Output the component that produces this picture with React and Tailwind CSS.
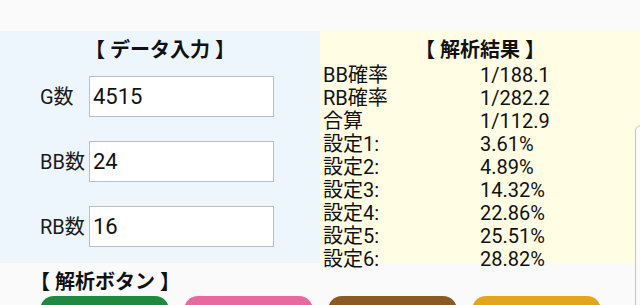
import React from "react";

const font = { fontFamily: 'Roboto, "Noto Sans CJK JP", sans-serif' };

function Field({ label, value }) {
  return (
    <div className="flex items-center h-[41px]">
      <div className="w-[89px] pl-[40px] text-[20px] leading-[24px] text-[#1a1a1a] whitespace-nowrap">{label}</div>
      <input
        readOnly
        value={value}
        className="w-[185px] h-[41px] border border-[#b9bec6] bg-white pl-[3px] text-[22px] text-[#111] outline-none"
        style={font}
      />
    </div>
  );
}

const rows = [
  ["BB確率", "1/188.1"],
  ["RB確率", "1/282.2"],
  ["合算", "1/112.9"],
  ["設定1:", "3.61%"],
  ["設定2:", "4.89%"],
  ["設定3:", "14.32%"],
  ["設定4:", "22.86%"],
  ["設定5:", "25.51%"],
  ["設定6:", "28.82%"],
];

export default function App() {
  return (
    <div className="relative w-full h-[305px] bg-[#fafafa] overflow-hidden text-[#111]" style={font}>
      <div className="h-[31px]" />
      <div className="flex h-[232px]">
        <div className="w-[320px] bg-[#eef6fd] pt-[7px]">
          <div className="text-center text-[20px] leading-[24px] font-bold">【 データ入力 】</div>
          <div className="mt-[14px] flex flex-col gap-[24px]">
            <Field label="G数" value="4515" />
            <Field label="BB数" value="24" />
            <Field label="RB数" value="16" />
          </div>
        </div>
        <div className="flex-1 bg-[#fffde4] pt-[7px]">
          <div className="text-center text-[20px] leading-[24px] h-[26px] font-bold">【 解析結果 】</div>
          <div className="flex flex-col pl-[3px]">
            {rows.map(([k, v]) => (
              <div key={k} className="flex h-[23px] text-[20px] leading-[23px]">
                <div className="w-[157px] whitespace-nowrap">{k}</div>
                <div className="whitespace-nowrap">{v}</div>
              </div>
            ))}
          </div>
        </div>
      </div>
      <div className="pt-[7px]">
        <div className="pl-[30px] text-[20px] leading-[24px] font-bold">【 解析ボタン 】</div>
        <div className="mt-[2px] flex gap-[15px] pl-[40px]">
          <div className="w-[129px] h-[40px] rounded-[14px] bg-[#1f8a3f]" />
          <div className="w-[129px] h-[40px] rounded-[14px] bg-[#e8699f]" />
          <div className="w-[129px] h-[40px] rounded-[14px] bg-[#8a5a24]" />
          <div className="w-[129px] h-[40px] rounded-[14px] bg-[#e3a51e]" />
        </div>
      </div>
      <div className="absolute left-[635px] top-[125px] w-[20px] h-[200px] border border-[#c4c4c4] rounded-tl-[6px] bg-[#fbfbfb]" />
    </div>
  );
}
